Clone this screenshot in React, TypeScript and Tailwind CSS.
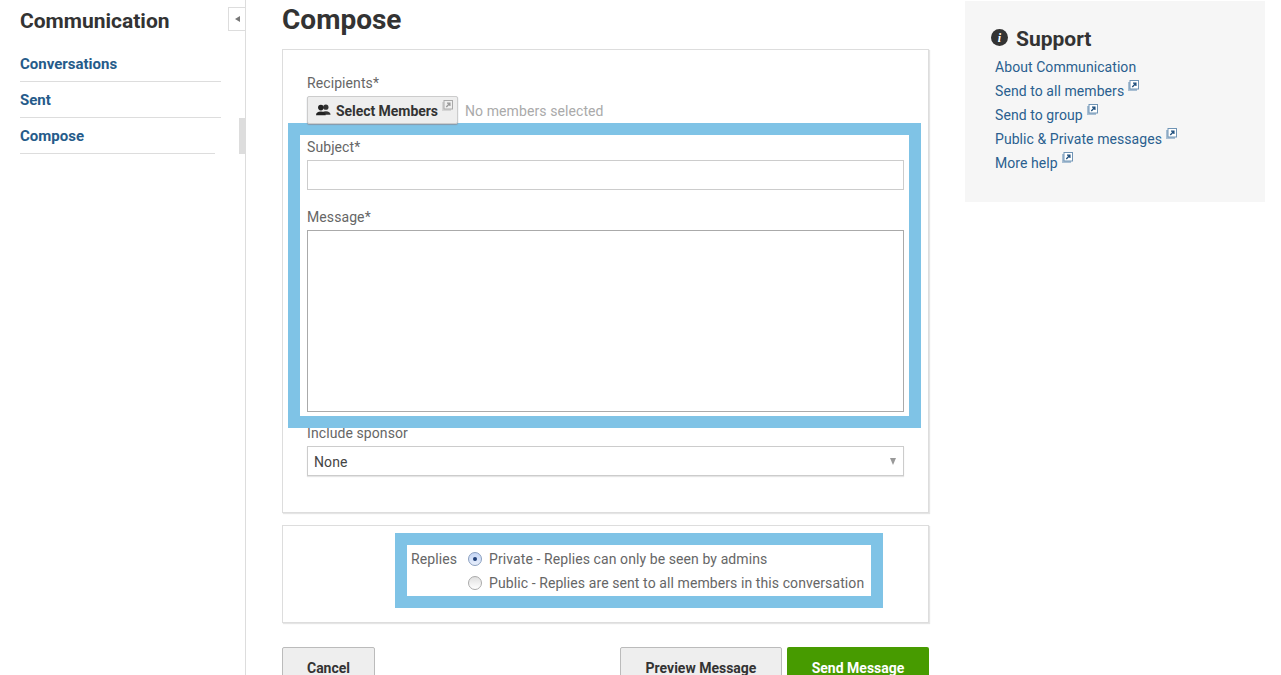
import React from "react";

const Ext = ({ dim = false }: { dim?: boolean }) => (
  <svg width="11" height="11" viewBox="0 0 11 11" className="shrink-0">
    <rect x="0" y="2" width="9" height="9" fill={dim ? "#d5d5d5" : "#a9bfd3"} />
    <rect x="2" y="0.5" width="8.5" height="8.5" fill={dim ? "#efefef" : "#fff"} stroke={dim ? "#aaa" : "#6f94b5"} strokeWidth="1" />
    <path d="M4.3 7 7.4 3.8M5 3.2h2.9v2.9" fill="none" stroke={dim ? "#999" : "#1f4f7d"} strokeWidth="1.3" />
  </svg>
);

const SideItem = ({ label, w }: { label: string; w: string }) => (
  <div className={`h-9 flex items-center pt-[2px] border-b border-[#dddddd] text-[15px] font-bold text-[#255b8a] ${w}`}>{label}</div>
);

const SupportLink = ({ label, ext = true }: { label: string; ext?: boolean }) => (
  <div className="h-6 flex items-center text-[14px] tracking-[0.07px] text-[#2a5f8f]">
    <span>{label}</span>
    {ext && <span className="ml-[4px] -mt-[11px]"><Ext /></span>}
  </div>
);

export default function App() {
  return (
    <div className="relative flex w-[1281px] h-[675px] overflow-hidden bg-white text-[#666666] font-['Roboto','Liberation_Sans',sans-serif]">
      <aside className="relative w-[246px] h-full shrink-0 border-r border-[#dddddd] pl-5 pt-[7px]">
        <div className="text-[21px] leading-7 font-bold text-[#333333]">Communication</div>
        <nav className="mt-[11px]">
          <SideItem label="Conversations" w="w-[201px]" />
          <SideItem label="Sent" w="w-[201px]" />
          <SideItem label="Compose" w="w-[195px]" />
        </nav>
        <button className="absolute right-0 top-[7px] w-[17px] h-6 border border-r-0 border-[#dddddd] bg-white flex items-center justify-center">
          <span className="w-0 h-0 border-y-[3.5px] border-y-transparent border-r-[5px] border-r-[#777777]" />
        </button>
        <div className="absolute right-0 top-[118px] w-[6px] h-9 bg-[#dddddd]" />
      </aside>

      <main className="w-[683px] shrink-0 pl-9">
        <h1 className="text-[28px] leading-10 font-bold text-[#333333]">Compose</h1>
        <section className="relative mt-[9px] w-[647px] h-[464px] border border-[#dddddd] shadow-[1px_1px_1px_#e5e5e5] px-6 pt-[23px] text-[14px] tracking-[0.09px]">
          <div className="h-[20px] leading-5">Recipients*</div>
          <div className="flex items-center mt-[3px] h-7">
            <button className="flex items-center w-[151px] h-[28px] pt-[2px] pl-[8px] border border-[#cccccc] rounded-[2px] bg-[#eeeeee] shadow-[0_1px_1px_#8899aa] text-[14px] tracking-[-0.05px] font-bold text-[#333333] relative z-10">
              <svg width="15" height="12" viewBox="0 0 16 12" className="mr-[5px] -mt-[2px]">
                <circle cx="10.5" cy="3" r="2.8" fill="#333" />
                <path d="M5.5 11c0-2.4 2-3.8 5-3.8s5 1.4 5 3.8z" fill="#333" />
                <circle cx="5.2" cy="3.4" r="3" fill="#222" />
                <path d="M0 11.5c0-2.8 2-4 5.2-4s5.2 1.2 5.2 4z" fill="#222" />
              </svg>
              Select Members
              <span className="absolute right-[4px] top-[3px]"><Ext dim /></span>
            </button>
            <span className="ml-[7px] pt-[2px] text-[#aaaaaa]">No members selected</span>
          </div>
          <div className="mt-[13px] leading-5">Subject*</div>
          <div className="mt-[3px] h-[30px] border border-[#cccccc]" />
          <div className="mt-[17px] leading-5">Message*</div>
          <div className="mt-[3px] h-[182px] border border-[#aaaaaa]" />
          <div className="mt-[11px] leading-5">Include sponsor</div>
          <div className="mt-[3px] h-[30px] border border-[#cccccc] shadow-[0_1px_1px_#e5e5e5] flex items-center justify-between pl-[6px] pr-[7px] text-[#444444]">
            <span className="pt-[3px]">None</span>
            <span className="w-0 h-0 border-x-[3.5px] border-x-transparent border-t-[7px] border-t-[#999999]" />
          </div>
          <div className="absolute left-[5px] top-[73px] w-[633px] h-[305px] border-[12px] border-[#7fc3e6] pointer-events-none" />
        </section>

        <section className="relative mt-3 w-[647px] h-[98px] border border-[#dddddd] shadow-[1px_1px_1px_#e5e5e5] pl-[128px] pt-[21px] text-[14px] tracking-[0.09px]">
          <div className="flex leading-6">
            <span className="w-[57px]">Replies</span>
            <div>
              <div className="flex items-center h-6">
                <span className="w-[14px] h-[14px] rounded-full border border-[#8a9fc0] bg-gradient-to-b from-[#c5d6f5] to-[#e8effc] flex items-center justify-center mr-[7px]">
                  <span className="w-1 h-1 rounded-full bg-[#1f3f77]" />
                </span>
                Private - Replies can only be seen by admins
              </div>
              <div className="flex items-center h-6">
                <span className="w-[14px] h-[14px] rounded-full border border-[#aaaaaa] bg-gradient-to-b from-[#e0e0e0] to-[#ffffff] mr-[7px]" />
                Public - Replies are sent to all members in this conversation
              </div>
            </div>
          </div>
          <div className="absolute left-[112px] top-[7px] w-[488px] h-[75px] border-[12px] border-[#7fc3e6] pointer-events-none" />
        </section>

        <div className="mt-6 w-[647px] flex text-[14px] font-bold">
          <button className="w-[93px] h-10 pt-[2px] border border-[#bbbbbb] rounded-t-[2px] bg-[#eeeeee] text-[#333333]">Cancel</button>
          <button className="ml-auto w-[162px] h-10 pt-[2px] border border-[#bbbbbb] rounded-t-[2px] bg-[#eeeeee] text-[#333333]">Preview Message</button>
          <button className="ml-[5px] w-[142px] h-10 pt-[2px] rounded-t-[2px] bg-[#479b00] text-white">Send Message</button>
        </div>
      </main>

      <aside className="ml-9 mt-[1px] w-[300px] h-[201px] bg-[#f6f6f6] pl-[26px] pt-6">
        <div className="flex items-center h-7">
          <svg width="17" height="17" viewBox="0 0 17 17" className="-mt-[4px]">
            <circle cx="8.5" cy="8.5" r="8.5" fill="#333" />
            <text x="8.5" y="13" textAnchor="middle" fontSize="12" fontWeight="700" fontStyle="italic" fontFamily="'Liberation Serif',serif" fill="#fff">i</text>
          </svg>
          <span className="ml-2 pt-[2px] text-[21px] font-bold text-[#333333]">Support</span>
        </div>
        <div className="mt-[2px] pl-1">
          <SupportLink label="About Communication" ext={false} />
          <SupportLink label="Send to all members" />
          <SupportLink label="Send to group" />
          <SupportLink label="Public & Private messages" />
          <SupportLink label="More help" />
        </div>
      </aside>
    </div>
  );
}
